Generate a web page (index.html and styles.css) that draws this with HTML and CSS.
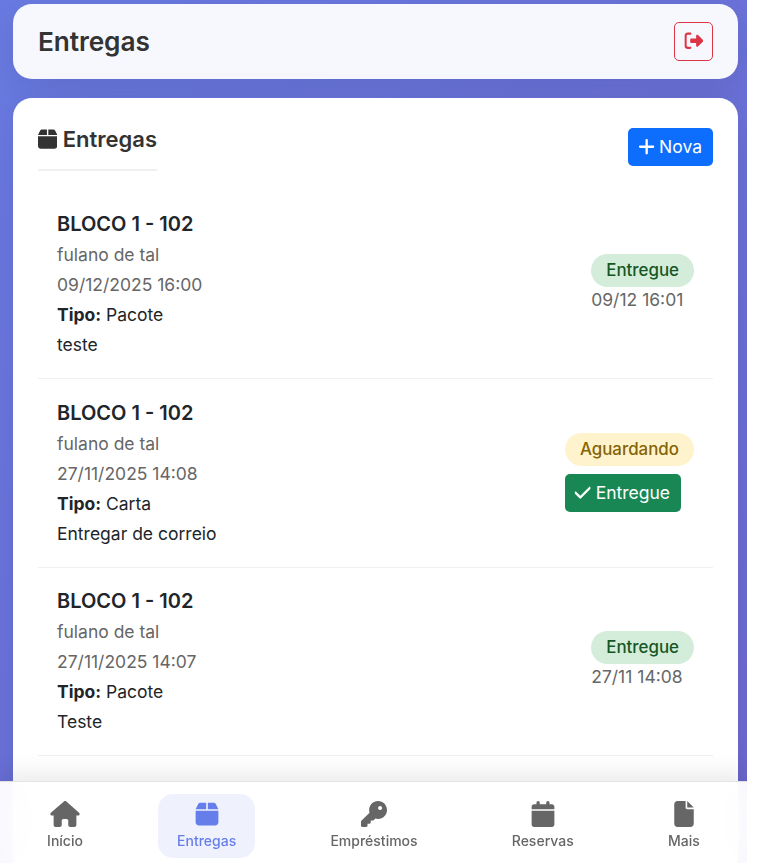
FILE: index.html
```html
<!DOCTYPE html>
<html lang="pt-BR">
  <head>
    <meta charset="UTF-8" />
    <meta name="viewport" content="width=device-width, initial-scale=1.0" />
    <title>Entregas</title>
    <link rel="stylesheet" href="styles.css">
  </head>

  <body>
    <!-- icons -->
    <svg class="sprite" aria-hidden="true">
      <symbol id="i-box" viewBox="0 0 448 512"><path d="M50.7 58.5L0 160H208V32H93.7C75.5 32 58.9 42.3 50.7 58.5zM240 160H448L397.3 58.5C389.1 42.3 372.5 32 354.3 32H240V160zm208 32H0V416c0 35.3 28.7 64 64 64H384c35.3 0 64-28.7 64-64V192z"/></symbol>
      <symbol id="i-logout" viewBox="0 0 512 512"><path d="M377.9 105.9L500.7 228.7c7.2 7.2 11.3 17.1 11.3 27.3s-4.1 20.1-11.3 27.3L377.9 406.1c-6.4 6.4-15 9.9-24 9.9c-18.7 0-33.9-15.2-33.9-33.9l0-62.1-128 0c-17.7 0-32-14.3-32-32l0-64c0-17.7 14.3-32 32-32l128 0 0-62.1c0-18.7 15.2-33.9 33.9-33.9c9 0 17.6 3.6 24 9.9zM160 96L96 96c-17.7 0-32 14.3-32 32l0 256c0 17.7 14.3 32 32 32l64 0c17.7 0 32 14.3 32 32s-14.3 32-32 32l-64 0c-53 0-96-43-96-96L0 128C0 75 43 32 96 32l64 0c17.7 0 32 14.3 32 32s-14.3 32-32 32z"/></symbol>
      <symbol id="i-plus" viewBox="0 0 448 512"><path d="M256 80c0-17.7-14.3-32-32-32s-32 14.3-32 32V224H48c-17.7 0-32 14.3-32 32s14.3 32 32 32H192V432c0 17.7 14.3 32 32 32s32-14.3 32-32V288H400c17.7 0 32-14.3 32-32s-14.3-32-32-32H256V80z"/></symbol>
      <symbol id="i-check" viewBox="0 0 448 512"><path d="M438.6 105.4c12.5 12.5 12.5 32.8 0 45.3l-256 256c-12.5 12.5-32.8 12.5-45.3 0l-128-128c-12.5-12.5-12.5-32.8 0-45.3s32.8-12.5 45.3 0L160 338.7 393.4 105.4c12.5-12.5 32.8-12.5 45.3 0z"/></symbol>
      <symbol id="i-home" viewBox="0 0 576 512"><path d="M575.8 255.5c0 18-15 32.1-32 32.1h-32l.7 160.2c0 2.7-.2 5.4-.5 8.1V472c0 22.1-17.9 40-40 40H456c-1.1 0-2.2 0-3.3-.1c-1.4 .1-2.8 .1-4.2 .1H416 392c-22.1 0-40-17.9-40-40V448 384c0-17.7-14.3-32-32-32H256c-17.7 0-32 14.3-32 32v64 24c0 22.1-17.9 40-40 40H160 128.1c-1.5 0-3-.1-4.5-.2c-1.2 .1-2.4 .2-3.6 .2H104c-22.1 0-40-17.9-40-40V360c0-.9 0-1.9 .1-2.8V287.6H32c-18 0-32-14-32-32.1c0-9 3-17 10-24L266.4 8c7-7 15-8 22-8s15 2 21 7L564.8 231.5c8 7 12 15 11 24z"/></symbol>
      <symbol id="i-key" viewBox="0 0 512 512"><path d="M336 352c97.2 0 176-78.8 176-176S433.2 0 336 0S160 78.8 160 176c0 18.7 2.9 36.8 8.3 53.7L7 391c-4.5 4.5-7 10.6-7 17v80c0 13.3 10.7 24 24 24h80c13.3 0 24-10.7 24-24V448h40c13.3 0 24-10.7 24-24V384h40c6.4 0 12.5-2.5 17-7l33.3-33.3c16.9 5.4 35 8.3 53.7 8.3zM376 96a40 40 0 1 1 0 80 40 40 0 1 1 0-80z"/></symbol>
      <symbol id="i-calendar" viewBox="0 0 448 512"><path d="M96 32V64H48C21.5 64 0 85.5 0 112v48H448V112c0-26.5-21.5-48-48-48H352V32c0-17.7-14.3-32-32-32s-32 14.3-32 32V64H160V32c0-17.7-14.3-32-32-32S96 14.3 96 32zM448 192H0V464c0 26.5 21.5 48 48 48H400c26.5 0 48-21.5 48-48V192z"/></symbol>
      <symbol id="i-file" viewBox="0 0 384 512"><path d="M0 64C0 28.7 28.7 0 64 0H224V128c0 17.7 14.3 32 32 32H384V448c0 35.3-28.7 64-64 64H64c-35.3 0-64-28.7-64-64V64zm384 64H256V0L384 128z"/></symbol>
    </svg>

    <div class="app">
      <header class="header">
        <h1>Entregas</h1>
        <button class="btn btn-logout" aria-label="Sair">
          <svg class="icon icon-wide"><use href="#i-logout"/></svg>
        </button>
      </header>

      <main class="card">
        <div class="card-top">
          <h2><svg class="icon"><use href="#i-box"/></svg> Entregas</h2>
          <button class="btn btn-primary"><svg class="icon"><use href="#i-plus"/></svg> Nova</button>
        </div>

        <div class="item">
          <div class="info">
            <div class="unit">BLOCO 1 - 102</div>
            <div class="muted">fulano de tal</div>
            <div class="muted">09/12/2025 16:00</div>
            <div><strong>Tipo:</strong> Pacote</div>
            <div>teste</div>
          </div>
          <div class="state">
            <span class="badge badge-done">Entregue</span>
            <div class="muted">09/12 16:01</div>
          </div>
        </div>

        <div class="item">
          <div class="info">
            <div class="unit">BLOCO 1 - 102</div>
            <div class="muted">fulano de tal</div>
            <div class="muted">27/11/2025 14:08</div>
            <div><strong>Tipo:</strong> Carta</div>
            <div>Entregar de correio</div>
          </div>
          <div class="state">
            <span class="badge badge-waiting">Aguardando</span>
            <button class="btn btn-success"><svg class="icon"><use href="#i-check"/></svg> Entregue</button>
          </div>
        </div>

        <div class="item">
          <div class="info">
            <div class="unit">BLOCO 1 - 102</div>
            <div class="muted">fulano de tal</div>
            <div class="muted">27/11/2025 14:07</div>
            <div><strong>Tipo:</strong> Pacote</div>
            <div>Teste</div>
          </div>
          <div class="state">
            <span class="badge badge-done">Entregue</span>
            <div class="muted">27/11 14:08</div>
          </div>
        </div>
      </main>

      <nav class="bottom-nav">
        <a class="nav-item"><svg class="nav-icon"><use href="#i-home"/></svg>Início</a>
        <a class="nav-item active"><svg class="nav-icon"><use href="#i-box"/></svg>Entregas</a>
        <a class="nav-item"><svg class="nav-icon"><use href="#i-key"/></svg>Empréstimos</a>
        <a class="nav-item"><svg class="nav-icon"><use href="#i-calendar"/></svg>Reservas</a>
        <a class="nav-item"><svg class="nav-icon"><use href="#i-file"/></svg>Mais</a>
      </nav>
    </div>
  </body>
</html>
```
FILE: styles.css
```css
* {
  box-sizing: border-box;
}

body {
  margin: 0;
  background-color: #fff;
  color: #212529;
  font-family: Inter, "Liberation Sans", sans-serif;
  font-size: 17.5px;
  line-height: 30px;
}

h1,
h2 {
  margin: 0;
  color: #333;
}

.sprite {
  display: none;
}

.app {
  position: relative;
  display: flex;
  flex-direction: column;
  gap: 19px;
  width: 747px;
  height: 863px;
  padding: 4px 9px 0 13px;
  overflow: hidden;
  background: linear-gradient(135deg, #697be3 0%, #6d69d0 100%);
}

.header {
  display: flex;
  justify-content: space-between;
  align-items: center;
  flex-shrink: 0;
  height: 75px;
  padding: 0 25px;
  border-radius: 19px;
  background-color: rgba(255, 255, 255, 0.95);
  box-shadow: 0 10px 40px rgba(0, 0, 0, 0.1);
}

.header h1 {
  font-size: 26.25px;
  font-weight: 600;
  letter-spacing: -0.1px;
}

.card {
  flex: 1;
  padding: 25px 25px 0;
  border-radius: 19px 19px 0 0;
  background-color: #fff;
  box-shadow: 0 10px 40px rgba(0, 0, 0, 0.1);
}

.card-top {
  display: flex;
  justify-content: space-between;
  align-items: center;
  height: 48px;
  margin-bottom: 19px;
}

.card-top h2 {
  height: 48px;
  border-bottom: 2px solid #f0f0f0;
  font-size: 22px;
  font-weight: 600;
  line-height: 32px;
}

.icon {
  width: 0.875em;
  height: 1em;
  fill: currentColor;
  vertical-align: -0.125em;
}

.icon-wide {
  width: 1em;
}

.btn {
  height: 38px;
  padding: 0 10px;
  border: 1px solid transparent;
  border-radius: 5px;
  color: #fff;
  font-family: inherit;
  font-size: 17.5px;
  line-height: 26px;
  cursor: pointer;
}

.btn .icon {
  transform: scale(1.08);
}

.btn-logout {
  height: 39px;
  border-color: #dc3545;
  background-color: transparent;
  color: #dc3545;
}

.btn-primary {
  background-color: #0d6efd;
}

.btn-success {
  margin-top: 8px;
  padding: 0 9.5px;
  background-color: #198754;
}

.item {
  display: flex;
  justify-content: space-between;
  align-items: center;
  height: 188.75px;
  padding: 0 19px;
  border-bottom: 1px solid #f0f0f0;
}

.unit {
  margin-bottom: 1px;
  font-size: 20px;
  font-weight: 600;
}

.muted {
  color: #666;
}

.info {
  padding-top: 1px;
}

.state {
  display: flex;
  flex-direction: column;
  align-items: flex-start;
}

.state .muted {
  margin-top: -2px;
}

.badge {
  padding: 3px 15px 4px;
  border-radius: 25px;
  font-size: 16.9px;
  font-weight: 500;
  line-height: 26px;
}

.badge-done {
  margin-top: 1px;
  background-color: #d4edda;
  color: #155724;
}

.badge-waiting {
  background-color: #fff3cd;
  color: #856404;
}

.bottom-nav {
  position: absolute;
  left: 0;
  right: 0;
  bottom: 0;
  display: flex;
  justify-content: space-around;
  align-items: flex-start;
  height: 82px;
  padding-top: 12px;
  border-top: 1px solid rgba(0, 0, 0, 0.1);
  background-color: rgba(255, 255, 255, 0.95);
  backdrop-filter: blur(20px);
  box-shadow: 0 -5px 25px rgba(0, 0, 0, 0.1);
}

.nav-item {
  display: flex;
  flex-direction: column;
  align-items: center;
  gap: 3px;
  height: 64px;
  padding: 7px 18.75px 0;
  border-radius: 15px;
  color: #666;
  font-size: 14px;
  font-weight: 500;
  line-height: 21px;
}

.nav-item.active {
  background-color: rgba(102, 126, 234, 0.1);
  color: #667eea;
}

.nav-icon {
  width: 32px;
  height: 26px;
  fill: currentColor;
}
```
